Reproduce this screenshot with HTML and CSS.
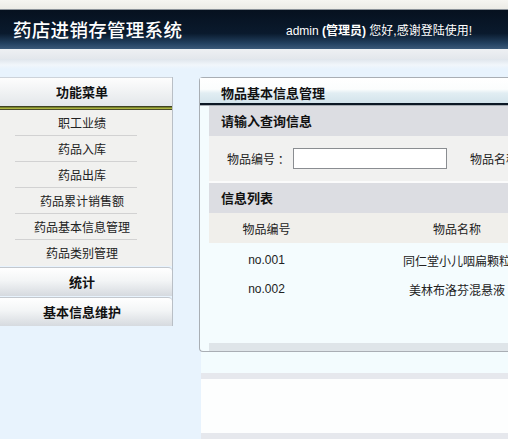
FILE: index.html
```html
<!DOCTYPE html>
<html lang="zh-CN">

<head>
    <meta charset="UTF-8">
    <title>药店进销存管理系统</title>
    <link rel="stylesheet" href="styles.css">
</head>

<body>
    <!-- Browser strip -->
    <div class="topstrip"></div>

    <!-- Header -->
    <header class="header">
        <div class="logo">药店进销存管理系统</div>
        <div class="welcome">admin <b>(管理员)</b> 您好,感谢登陆使用!</div>
    </header>
    <div class="subbar"></div>

    <div class="main">
        <!-- Left menu -->
        <aside class="sidebar">
            <div class="menu-title">功能菜单</div>
            <div class="menu-line"></div>
            <ul class="menu">
                <li>职工业绩</li>
                <li>药品入库</li>
                <li>药品出库</li>
                <li>药品累计销售额</li>
                <li>药品基本信息管理</li>
                <li>药品类别管理</li>
            </ul>
            <div class="menu-btn">统计</div>
            <div class="menu-btn">基本信息维护</div>
        </aside>

        <!-- Content -->
        <section class="content">
            <div class="panel">
                <div class="panel-title">物品基本信息管理</div>
                <div class="panel-line"></div>
                <div class="panel-body">
                    <div class="block-head">请输入查询信息</div>
                    <div class="search-row">
                        <label>物品编号 ：</label>
                        <input type="text" class="search-input">
                        <label class="second">物品名称 ：</label>
                        <input type="text" class="search-input">
                    </div>
                    <div class="block-head list-head">信息列表</div>
                    <table class="list">
                        <thead>
                            <tr>
                                <th class="col-code">物品编号</th>
                                <th class="col-name">物品名称</th>
                                <th>物品类别</th>
                            </tr>
                        </thead>
                        <tbody>
                            <tr>
                                <td>no.001</td>
                                <td>同仁堂小儿咽扁颗粒</td>
                                <td>儿科用药</td>
                            </tr>
                            <tr>
                                <td>no.002</td>
                                <td>美林布洛芬混悬液</td>
                                <td>儿科用药</td>
                            </tr>
                        </tbody>
                    </table>
                    <div class="panel-foot"></div>
                </div>
            </div>
            <div class="after-panel"></div>
            <div class="after-band"></div>
            <div class="after-white"></div>
            <div class="after-band"></div>
        </section>
    </div>
</body>

</html>
```

FILE: styles.css
```css
/* Base Styles */
* {
    margin: 0;
    padding: 0;
    box-sizing: border-box;
}

html,
body {
    overflow: hidden;
}

body {
    background-color: #e8f3fd;
    color: #222;
    font-family: "Liberation Sans", "Noto Sans CJK SC", sans-serif;
    font-size: 12px;
    height: 439px;
}

/* Top strip */
.topstrip {
    height: 10px;
    background: linear-gradient(#f6f5f1, #ecebe6);
    border-bottom: 1px solid #8c9299;
}

/* Header */
.header {
    height: 39px;
    background: linear-gradient(#06111f 0%, #0a1a2d 60%, #22405f 85%, #3b5a7a 100%);
    display: flex;
    justify-content: space-between;
    align-items: center;
    padding: 0 36px 2px 13px;
    color: #ffffff;
}

.logo {
    font-family: "Noto Sans CJK SC", sans-serif;
    font-size: 18.5px;
    font-weight: 500;
    letter-spacing: 0.3px;
}

.welcome {
    font-family: "Liberation Sans", "Noto Sans CJK SC", sans-serif;
    font-size: 12px;
    padding-top: 2px;
}

.welcome b {
    font-weight: 700;
}

.subbar {
    height: 10px;
    background: linear-gradient(#eef0f3, #e3e7ec);
}

/* Layout */
.main {
    display: flex;
    width: 900px;
    padding-top: 18px;
    background: linear-gradient(#dfe5ec, #f1f6fb 6px, #e8f3fd 10px);
}

/* Sidebar */
.sidebar {
    width: 173px;
    flex-shrink: 0;
    border-right: 1px solid #b9bfc6;
    align-self: flex-start;
}

.menu-title {
    height: 29px;
    line-height: 27px;
    padding-right: 8px;
    text-align: center;
    font-family: "Noto Sans CJK SC", sans-serif;
    font-size: 13px;
    font-weight: 700;
    color: #111;
    background: linear-gradient(#fdfdfd, #e3e7ea);
    border-top: 1px solid #cdd3da;
}

.menu-line {
    height: 4px;
    background: linear-gradient(#222 0%, #7f8a2a 40%, #c9d24a 55%, #1b1b1b 100%);
}

.menu {
    list-style: none;
    background-color: #f1f1ef;
}

.menu li {
    height: 26px;
    line-height: 25px;
    padding-right: 8px;
    text-align: center;
    font-family: "Noto Sans CJK SC", sans-serif;
    font-size: 12px;
    color: #222;
    background: linear-gradient(#d2d2d2, #d2d2d2) no-repeat 15px 100% / 122px 1px;
}

.menu li:last-child {
    background: none;
}

.menu-btn {
    height: 29px;
    line-height: 28px;
    padding-right: 8px;
    margin-top: 1px;
    text-align: center;
    font-family: "Noto Sans CJK SC", sans-serif;
    font-size: 13px;
    font-weight: 700;
    color: #111;
    background: linear-gradient(#ffffff, #f3f5f6 45%, #d6dadf);
    border-top: 1px solid #c3c8ce;
    border-radius: 0 4px 0 0;
}

/* Content */
.content {
    margin-left: 26px;
    width: 640px;
    flex-shrink: 0;
}

.panel {
    border: 1px solid #a9aeb4;
    border-right: none;
    border-radius: 4px 0 0 4px;
    background-color: #f4fcfe;
}

.panel-title {
    height: 25px;
    line-height: 30px;
    padding-left: 21px;
    font-family: "Noto Sans CJK SC", sans-serif;
    font-size: 13px;
    font-weight: 700;
    color: #111;
    background: linear-gradient(#ffffff 0%, #fbfdfd 45%, #e2eef3 60%, #d3e3eb 100%);
}

.panel-line {
    height: 3px;
    background: linear-gradient(#0b1724 66%, #a7acb2 66%);
}

.panel-body {
    padding-left: 9px;
}

.block-head {
    height: 30px;
    line-height: 30px;
    padding-left: 12px;
    font-family: "Noto Sans CJK SC", sans-serif;
    font-size: 13px;
    font-weight: 700;
    color: #111;
    background-color: #dcdde2;
}

.search-row {
    height: 47px;
    display: flex;
    align-items: center;
    padding-left: 18px;
    background-color: #f1f1f0;
    border-bottom: 2px solid #fbfbfb;
    font-family: "Noto Sans CJK SC", sans-serif;
    font-size: 12px;
    color: #222;
}

.search-row label {
    width: 66px;
}

.search-row .second {
    margin-left: 23px;
}

.search-input {
    width: 154px;
    height: 21px;
    border: 1px solid #8a8d91;
    background-color: #ffffff;
}

/* Table */
.list {
    border-collapse: collapse;
    width: 100%;
    font-size: 12px;
}

.list th {
    height: 30px;
    font-family: "Noto Sans CJK SC", sans-serif;
    font-weight: 400;
    color: #222;
    background-color: #f0efeb;
    text-align: center;
}

.list .col-code {
    width: 115px;
}

.list .col-name {
    width: 266px;
}

.list td {
    height: 30px;
    text-align: center;
    font-family: "Liberation Sans", "Noto Sans CJK SC", sans-serif;
    color: #222;
    padding-top: 2px;
}

.list tbody tr:first-child td {
    padding-top: 4px;
}

.panel-foot {
    height: 48px;
    background: linear-gradient(#f4fcfe 40px, #dfe5e9 40px);
}

.after-panel {
    height: 21px;
    margin-left: 2px;
    background-color: #f3fcfe;
}

.after-band {
    height: 6px;
    margin-left: 2px;
    background-color: #e6e8ed;
}

.after-white {
    height: 54px;
    margin-left: 2px;
    background-color: #fdfefe;
}
```
